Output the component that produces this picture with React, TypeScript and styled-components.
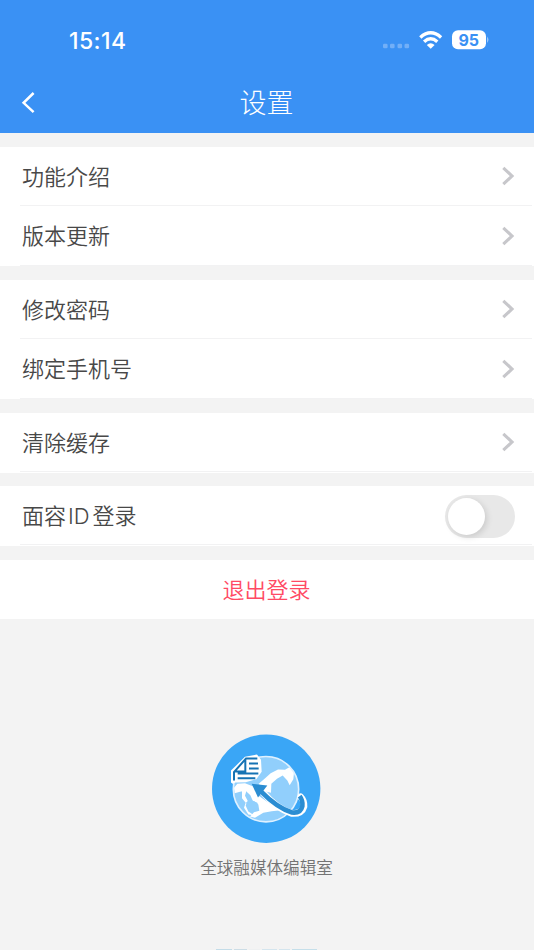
import React from "react";
import styled, { createGlobalStyle } from "styled-components";

const Global = createGlobalStyle`
  * { box-sizing: border-box; }
  body { margin: 0; background: #f3f3f3; font-family: "Noto Sans CJK SC", sans-serif; }
`;
const Screen = styled.div`
  width: 534px; height: 950px; overflow: hidden; background: #f3f3f3;
  display: flex; flex-direction: column;
`;
const Header = styled.header`
  flex: none; height: 133px; background: #3a91f4; color: #fff;
`;
const StatusBar = styled.div`
  height: 80px; padding: 0 45px 0 69px; display: flex; align-items: center; justify-content: space-between;
`;
const Clock = styled.span`
  font: 550 23px/28px Inter, sans-serif; letter-spacing: 0.4px; padding-top: 1px;
`;
const NavBar = styled.div`
  height: 43px; padding: 0 21px 0 20px; display: grid; grid-template-columns: 20px 1fr 20px; align-items: center;
`;
const Title = styled.h1`
  margin: 0; text-align: center; font-size: 27px; line-height: 40px; font-weight: 300;
`;
const Main = styled.main`
  flex: none; padding-top: 13.7px; display: flex; flex-direction: column; gap: 13.7px;
`;
const Group = styled.section`
  background: #fff;
`;
const Row = styled.div`
  height: 59.7px; padding: 0 19px 1px 22px; color: #484848; font-size: 22px; line-height: 32px; font-weight: 350;
  display: flex; align-items: center; justify-content: space-between;
  background: linear-gradient(#f2f2f3, #f2f2f3) 20px 100% / 512px 1.4px no-repeat;
`;
const Label = styled.span`
  height: 32px; margin-bottom: 3px;
`;
const Latin = styled.span`
  font-family: Inter, sans-serif; font-weight: 350; font-size: 22px; line-height: 1; margin: 0 3px 0 2px;
`;
const Logout = styled.button`
  height: 59.7px; border: 0; padding: 0 1px 3px 0; background: #fff; color: #ff4a64;
  font: 350 22px/32px "Noto Sans CJK SC", sans-serif;
`;
const Switch = styled.span`
  width: 70px; height: 43px; border-radius: 22px; background: #e8e8e8; padding: 3px; display: flex; margin-top: 1px;
`;
const Knob = styled.span`
  width: 37px; height: 37px; border-radius: 50%; background: #fff; box-shadow: 2px 2px 6px rgba(0,0,0,.13);
`;
const Brand = styled.div`
  flex: none; padding: 115px 0 0 0; display: flex; flex-direction: column; align-items: center;
`;
const BrandName = styled.div`
  margin-top: 10px; padding-right: 1px; font-size: 16.6px; line-height: 26px; color: #737373; font-weight: 350;
`;
const Footer = styled.div`
  margin-top: auto; align-self: center; padding-right: 2px; display: flex; gap: 2px; height: 1px;
`;
const FooterMark = styled.i<{ $w: number; $c: string }>`
  width: ${p => p.$w}px; height: 1px; background: ${p => p.$c};
`;

const Chevron = () => (
  <svg width="14" height="20" viewBox="0 0 14 20" fill="none" stroke="#c7c7cb" strokeWidth="3.1">
    <path d="M2.3 1.8 11 10 2.3 18.2" />
  </svg>
);

const Logo = () => (
  <svg width="110" height="110" viewBox="0 0 110 110">
    <circle cx="54.2" cy="54.8" r="54.2" fill="#3aa6f6" />
    <g transform="translate(-12 -9.5) scale(.33333)">
      <circle cx="198" cy="194" r="98" fill="#91cffc" />
      <path d="M176 178 192 164 212 146 234 135 255 136 268 128 282 144 280 164 269 182 262 168 248 153 231 163 214 178 213 205 194 200Z" fill="#fff" />
      <path d="M102 190 112 178 135 176 160 186 176 214 210 238 242 257 215 260 190 265 165 280 150 276 162 263 178 259 175 240 158 228 151 212 137 199 120 202 104 206Z" fill="#fff" />
      <path d="M126 199 140 196 135 214 143 229 137 243 145 261 162 272 145 270 132 250 137 235 126 221Z" fill="#fff" />
      <path d="M137 235Q155 223 172 235 176 246 166 253 148 259 140 249L146 243Z" fill="#91cffc" />
      <circle cx="198" cy="194" r="98" fill="none" stroke="#dff1ff" strokeWidth="5" />
      <path d="M93 174V138L135 97 171 90 183 106 185 142 169 164 137 173 106 174 98 178Z" fill="#fff" />
      <path d="M102 168V143L138 102H172M105 141H136V106M147 117H174M147 132H176M113 147H175M113 161H166" fill="none" stroke="#1673b4" strokeWidth="6" />
      <path d="M188 203Q230 253 276 267 306 268 312 246 313 228 302 217" fill="none" stroke="#fff" strokeWidth="20" strokeLinecap="round" />
      <path d="M182 200Q232 251 276 264 302 267 307 245 309 228 299 215" fill="none" stroke="#2b8dd2" strokeWidth="14" />
      <path d="M155 178 202 183 174 219Z" fill="#2b8dd2" />
    </g>
  </svg>
);

const StatusIcons = () => (
  <svg width="107" height="24" viewBox="0 0 107 24">
    <g fill="#72aff7">
      {[1, 8, 15.5, 22.5].map(x => <rect key={x} x={x} y="15.7" width="4.6" height="4.6" rx="1.4" />)}
    </g>
    <g fill="none" stroke="#fff" strokeWidth="3.4">
      <path d="M38.3 9.4Q48.7.2 59.1 9.4M42.1 13.7Q48.7 7.9 55.3 13.7" />
    </g>
    <path d="m44.8 16.9q3.9-3.1 7.8 0L48.7 20.8Z" fill="#fff" />
    <rect x="70" y="2.3" width="34" height="19" rx="6" fill="#fff" />
    <path d="M105 8.5v6.5q3-3.2 0-6.5" fill="#9cc8fa" />
    <text x="86.7" y="17.6" textAnchor="middle" fontFamily="Inter" fontSize="16" fontWeight="700" fill="#3a91f4">95</text>
  </svg>
);

export default function App() {
  const groups = [["功能介绍", "版本更新"], ["修改密码", "绑定手机号"], ["清除缓存"]];
  return (
    <>
      <Global />
      <Screen>
        <Header>
          <StatusBar>
            <Clock>15:14</Clock>
            <StatusIcons />
          </StatusBar>
          <NavBar>
            <svg width="18" height="24" viewBox="0 0 18 24" fill="none" stroke="#fff" strokeWidth="2.5">
              <path d="M13.6 3 3.6 12.8l10 9.4" />
            </svg>
            <Title>设置</Title>
          </NavBar>
        </Header>
        <Main>
          {groups.map(items => (
            <Group key={items[0]}>
              {items.map(t => <Row key={t}><Label>{t}</Label><Chevron /></Row>)}
            </Group>
          ))}
          <Group>
            <Row>
              <Label>面容<Latin>ID</Latin>登录</Label>
              <Switch role="switch" aria-checked="false"><Knob /></Switch>
            </Row>
          </Group>
          <Logout>退出登录</Logout>
        </Main>
        <Brand>
          <Logo />
          <BrandName>全球融媒体编辑室</BrandName>
        </Brand>
        <Footer>
          <FooterMark $w={16} $c="#c3dce8" />
          <FooterMark $w={13} $c="#ccdde6" />
          <FooterMark $w={11} $c="#eef0f1" />
          <FooterMark $w={15} $c="#d4e5ee" />
          <FooterMark $w={11} $c="#d4e5ee" />
          <FooterMark $w={25} $c="#c5dfea" />
        </Footer>
      </Screen>
    </>
  );
}
